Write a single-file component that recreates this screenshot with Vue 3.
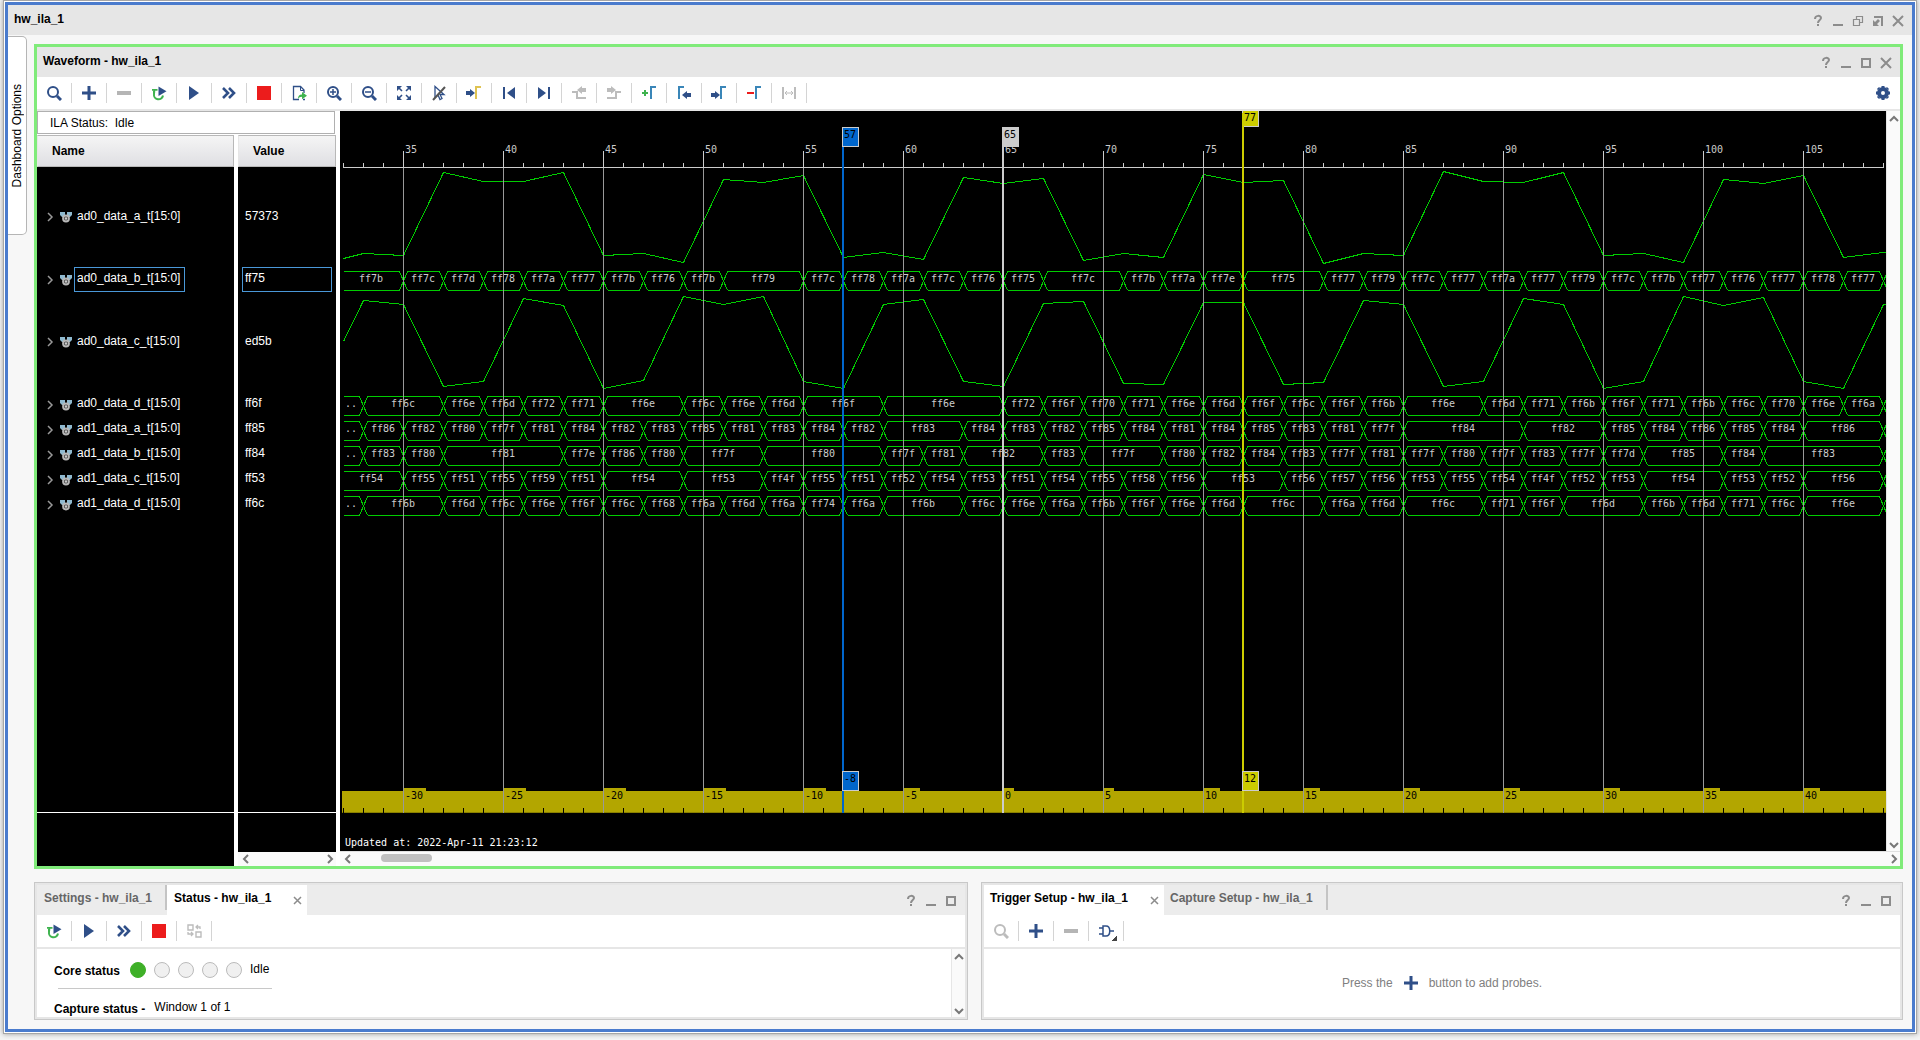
<script setup>
const INK = '#2f4f88'
const GREEN = '#3fb34f'
const TEAL = '#3a86b8'
const OFF = '#bcbcbc'

const flag = (x, y, c) => `<path d="M${x} ${y + 12}V${y}H${x + 5}" fill="none" stroke="${c}" stroke-width="2"/>`
const arrow = (x, y, dir, c) =>
  `<path d="M${x} ${y - 2}h${4 * dir}v-2l${5 * dir} 4l${-5 * dir} 4v-2h${-4 * dir}z" fill="${c}"/>`
const lens = (c, inner = '') =>
  `<circle cx="7" cy="7" r="5" fill="none" stroke="${c}" stroke-width="2"/><path d="M11 11l4 4" stroke="${c}" stroke-width="3"/>${inner}`

const icons = {
  search: lens(INK),
  searchOff: lens(OFF),
  plus: `<path d="M8 1v14M1 8h14" stroke="${INK}" stroke-width="3"/>`,
  minus: `<path d="M1 6h14v4H1z" fill="#b5b5b5"/>`,
  retrigger: `<path d="M3 6v3a4.5 4.5 0 0 0 9 1.5" fill="none" stroke="${GREEN}" stroke-width="2"/><path d="M1 4h5.5v1.8H4.2v2H2.5V5.8H1z" fill="${GREEN}"/><path d="M7.5 1.5V11l8-4.8z" fill="${INK}"/>`,
  play: `<path d="M3 1v14l10-7z" fill="${INK}"/>`,
  forward: `<path d="M2 3l5 5-5 5M8 3l5 5-5 5" fill="none" stroke="${INK}" stroke-width="2.6"/>`,
  stop: `<path d="M1 1h14v14H1z" fill="#ec1c1c"/>`,
  exportDoc: `<path d="M13 8V5L9.5 1.5h-7v13H8M12 14.5h2" fill="none" stroke="${INK}" stroke-width="1.3"/><path d="M9.5 1.5v4H13" fill="none" stroke="${INK}"/><path d="M7 14c0-3 1-4.5 4-4.5V7l5 3.8-5 3.4v-2.4c-2 0-3 .8-4 2.2z" fill="${GREEN}"/>`,
  zoomIn: lens(INK, `<path d="M7 4v6M4 7h6" stroke="${INK}" stroke-width="1.5"/>`),
  zoomOut: lens(INK, `<path d="M4 7h6" stroke="${INK}" stroke-width="1.5"/>`),
  fit: `<path d="M1 1h5L1 6zM15 1v5l-5-5zM1 15v-5l5 5zM15 15h-5l5-5z" fill="${INK}"/><path d="M3 3l3 3M13 3l-3 3M3 13l3-3M13 13l-3-3" stroke="${INK}" stroke-width="1.6"/>`,
  noCursor: `<path d="M4 1.5v11L7 10l2 4.500 2-1-2-4h4z" fill="none" stroke="${INK}" stroke-width="1.3"/><path d="M2 15L14 2" stroke="#555" stroke-width="2"/>`,
  gotoCursor: arrow(0, 8, 1, INK) + flag(10, 2, '#dfc352'),
  first: `<path d="M2 2h2v12H2zM14 2v12L6 8z" fill="${INK}"/>`,
  last: `<path d="M12 2h2v12h-2zM2 2v12l8-6z" fill="${INK}"/>`,
  prevEdge: `<path d="M1 7h5v6h9" fill="none" stroke="${OFF}" stroke-width="2"/>${arrow(15, 5, -1, OFF)}`,
  nextEdge: `<path d="M1 13h9V7h5" fill="none" stroke="${OFF}" stroke-width="2"/>${arrow(1, 5, 1, OFF)}`,
  addMarker: `<path d="M4 5v6M1 8h6" stroke="${GREEN}" stroke-width="2"/>${flag(10, 2, TEAL)}`,
  prevMarker: flag(3, 2, TEAL) + arrow(15, 10, -1, INK),
  nextMarker: arrow(0, 10, 1, INK) + flag(10, 2, TEAL),
  dropMarker: `<path d="M1 8h7" stroke="#ec1c1c" stroke-width="2"/>${flag(10, 2, TEAL)}`,
  span: `<path d="M2 2v12M14 2v12" stroke="${OFF}" stroke-width="2"/><path d="M4 8h8M6 6L4 8l2 2M10 6l2 2-2 2" fill="none" stroke="${OFF}"/>`,
  swap: `<path d="M2 2h5v5H2zM10 9h5v5h-5z" fill="none" stroke="${OFF}" stroke-width="1.4"/><path d="M14 6V4h-4M12 2l-2 2 2 2M2 9v2h5M5 9l2 2-2 2" fill="none" stroke="${OFF}" stroke-width="1.3"/>`,
  gate: `<path d="M5 3h3c5 0 5 10 0 10H5zM1 5h4M1 11h4M12 8h4" fill="none" stroke="${INK}" stroke-width="1.5"/>`,
  gear: `<circle cx="8" cy="8" r="4" fill="none" stroke="${INK}" stroke-width="4"/><path d="M8 1v2M8 13v2M1 8h2M13 8h2M3 3l1 1M13 13l-1-1M13 3l-1 1M3 13l1-1" stroke="${INK}" stroke-width="3"/>`,
  help: `<path d="M5 6c0-4 6-4 6-1 0 2-3 2-3 5M8 11v2" fill="none" stroke="#8c8c8c" stroke-width="2"/>`,
  minimize: `<path d="M3 11h10v2H3z" fill="#8c8c8c"/>`,
  maximize: `<path d="M4 4h8v8H4z" fill="none" stroke="#8c8c8c" stroke-width="2"/>`,
  restore: `<path d="M3.5 6.5h6v6h-6zM6.5 6.500v-3h6v6h-3" fill="none" stroke="#8c8c8c" stroke-width="1.2"/>`,
  float: `<path d="M4 4h8v9" fill="none" stroke="#8c8c8c" stroke-width="2"/><path d="M3 7v6h6L7 11l3-3-2-2-3 3z" fill="#8c8c8c"/>`,
  close: `<path d="M3 3l10 10M13 3L3 13" stroke="#8c8c8c" stroke-width="2"/>`,
  closeTab: `<path d="M5 5l7 7M12 5l-7 7" stroke="#8c8c8c" stroke-width="1.5"/>`,
  up: `<path d="M4 10l4-4 4 4" fill="none" stroke="#777" stroke-width="2"/>`,
  down: `<path d="M4 6l4 4 4-4" fill="none" stroke="#777" stroke-width="2"/>`,
  left: `<path d="M10 4L6 8l4 4" fill="none" stroke="#777" stroke-width="2"/>`,
  right: `<path d="M6 4l4 4-4 4" fill="none" stroke="#777" stroke-width="2"/>`,
  expand: `<path d="M6 4l4 4-4 4" fill="none" stroke="#999" stroke-width="1.5"/>`,
  probe: `<path d="M2 3h5v5H4L2 6zM9 3h5v3l-2 2H9z" fill="#8fb9cf"/><circle cx="8" cy="9.5" r="3" fill="#444" stroke="#b8b8b8" stroke-width="1.8"/><circle cx="8" cy="9.5" r="1.2" fill="#ccc"/>`
}

const waveTools = [
  ['search', 'Find'], ['plus', 'Add probes'], ['minus', 'Remove probes'], ['retrigger', 'Auto re-trigger'],
  ['play', 'Run trigger'], ['forward', 'Run trigger immediate'], ['stop', 'Stop trigger'], ['exportDoc', 'Export data'],
  ['zoomIn', 'Zoom in'], ['zoomOut', 'Zoom out'], ['fit', 'Zoom fit'], ['noCursor', 'Snap cursor'],
  ['gotoCursor', 'Go to cursor'], ['first', 'Go to first'], ['last', 'Go to last'], ['prevEdge', 'Previous transition'],
  ['nextEdge', 'Next transition'], ['addMarker', 'Add marker'], ['prevMarker', 'Previous marker'],
  ['nextMarker', 'Next marker'], ['dropMarker', 'Remove marker'], ['span', 'Measure span']
]
const statusTools = [
  ['retrigger', 'Auto re-trigger'], ['play', 'Run trigger'], ['forward', 'Run trigger immediate'],
  ['stop', 'Stop trigger'], ['swap', 'Switch view']
]
const triggerTools = [['searchOff', 'Find'], ['plus', 'Add probe'], ['minus', 'Remove probe'], ['gate', 'Trigger condition']]

const parseBus = text => text.split(' ').map(t => {
  const [label, end] = t.split(':')
  return { label, end: Number(end) }
})

const signals = [
  { name: 'ad0_data_a_t[15:0]', value: '57373', top: 56, analog: [91, 86, 88, 5, 14, 14, 5, 88, 86, 95, 12, 15, 8, 90, 85, 92, 10, 16, 11, 93, 86, 90, 7, 15, 13, 96, 86, 88, 4, 14, 15, 5, 88, 86, 95, 12, 16, 8, 90, 85] },
  { name: 'ad0_data_b_t[15:0]', value: 'ff75', top: 156, selected: true, bus: parseBus('ff7b:35 ff7c:37 ff7d:39 ff78:41 ff7a:43 ff77:45 ff7b:47 ff76:49 ff7b:51 ff79:55 ff7c:57 ff78:59 ff7a:61 ff7c:63 ff76:65 ff75:67 ff7c:71 ff7b:73 ff7a:75 ff7e:77 ff75:81 ff77:83 ff79:85 ff7c:87 ff77:89 ff7a:91 ff77:93 ff79:95 ff7c:97 ff7b:99 ff77:101 ff76:103 ff77:105 ff78:107 ff77:109') },
  { name: 'ad0_data_c_t[15:0]', value: 'ed5b', top: 181, analog: [49, 8, 12, 94, 89, 6, 13, 96, 88, 4, 12, 4, 89, 96, 12, 7, 89, 94, 11, 9, 91, 92, 10, 10, 92, 90, 8, 12, 94, 89, 6, 12, 96, 89, 4, 13, 5, 89, 96, 12] },
  { name: 'ad0_data_d_t[15:0]', value: 'ff6f', top: 281, bus: parseBus('..:33 ff6c:37 ff6e:39 ff6d:41 ff72:43 ff71:45 ff6e:49 ff6c:51 ff6e:53 ff6d:55 ff6f:59 ff6e:65 ff72:67 ff6f:69 ff70:71 ff71:73 ff6e:75 ff6d:77 ff6f:79 ff6c:81 ff6f:83 ff6b:85 ff6e:89 ff6d:91 ff71:93 ff6b:95 ff6f:97 ff71:99 ff6b:101 ff6c:103 ff70:105 ff6e:107 ff6a:109') },
  { name: 'ad1_data_a_t[15:0]', value: 'ff85', top: 306, bus: parseBus('..:33 ff86:35 ff82:37 ff80:39 ff7f:41 ff81:43 ff84:45 ff82:47 ff83:49 ff85:51 ff81:53 ff83:55 ff84:57 ff82:59 ff83:63 ff84:65 ff83:67 ff82:69 ff85:71 ff84:73 ff81:75 ff84:77 ff85:79 ff83:81 ff81:83 ff7f:85 ff84:91 ff82:95 ff85:97 ff84:99 ff86:101 ff85:103 ff84:105 ff86:109') },
  { name: 'ad1_data_b_t[15:0]', value: 'ff84', top: 331, bus: parseBus('..:33 ff83:35 ff80:37 ff81:43 ff7e:45 ff86:47 ff80:49 ff7f:53 ff80:59 ff7f:61 ff81:63 ff82:67 ff83:69 ff7f:73 ff80:75 ff82:77 ff84:79 ff83:81 ff7f:83 ff81:85 ff7f:87 ff80:89 ff7f:91 ff83:93 ff7f:95 ff7d:97 ff85:101 ff84:103 ff83:109') },
  { name: 'ad1_data_c_t[15:0]', value: 'ff53', top: 356, bus: parseBus('ff54:35 ff55:37 ff51:39 ff55:41 ff59:43 ff51:45 ff54:49 ff53:53 ff4f:55 ff55:57 ff51:59 ff52:61 ff54:63 ff53:65 ff51:67 ff54:69 ff55:71 ff58:73 ff56:75 ff53:79 ff56:81 ff57:83 ff56:85 ff53:87 ff55:89 ff54:91 ff4f:93 ff52:95 ff53:97 ff54:101 ff53:103 ff52:105 ff56:109') },
  { name: 'ad1_data_d_t[15:0]', value: 'ff6c', top: 381, bus: parseBus('..:33 ff6b:37 ff6d:39 ff6c:41 ff6e:43 ff6f:45 ff6c:47 ff68:49 ff6a:51 ff6d:53 ff6a:55 ff74:57 ff6a:59 ff6b:63 ff6c:65 ff6e:67 ff6a:69 ff6b:71 ff6f:73 ff6e:75 ff6d:77 ff6c:81 ff6a:83 ff6d:85 ff6c:89 ff71:91 ff6f:93 ff6d:97 ff6b:99 ff6d:101 ff71:103 ff6c:105 ff6e:109') }
]

// Sample axis: 20 px per sample, first visible sample is 32.
const FIRST = 32
const LAST = 109
const TRIGGER = 65
const sx = s => 3 + 20 * (s - FIRST)

const samples = Array.from({ length: LAST - FIRST + 1 }, (_, i) => FIRST + i)
const majors = samples.filter(s => s % 5 === 0)
const minors = samples.filter(s => s % 5 !== 0)
const offsets = majors.map(s => ({ s, text: String(s - TRIGGER) }))

// Analog traces change on odd samples; the first point is the cut-off edge.
const analogPoints = sig => {
  const pts = sig.analog.map((v, i) => [sx(i === 0 ? FIRST : 31 + 2 * i) + 0.5, sig.top + v + 0.5])
  const last = pts[pts.length - 1]
  pts.push([last[0] + 4, last[1]])
  return pts.map(p => p.join(',')).join(' ')
}

const busPath = sig => {
  const t = sig.top + 4.5
  const b = t + 19
  let x = sx(FIRST) + 0.5
  let d = ''
  for (const c of sig.bus) {
    const e = sx(c.end) + 0.5
    d += `M${x} ${t}H${e - 4}L${e + 4} ${b}M${x} ${b}H${e - 4}L${e + 4} ${t}`
    x = e + 4
  }
  return d
}

// Labels sit in the middle of their cell; the first cell starts at the pane's edge.
const busLabels = sig => {
  let start = 0
  return sig.bus.map(c => {
    const x = Math.floor((start + sx(c.end)) / 2)
    start = sx(c.end)
    return { x, text: c.label }
  })
}
</script>

<template>
  <div class="frame">
    <main class="window">
      <header class="bar">
        <h1>hw_ila_1</h1>
        <div class="controls">
          <button v-for="c in ['help', 'minimize', 'restore', 'float', 'close']" :key="c" :aria-label="c">
            <svg width="16" height="16" v-html="icons[c]" />
          </button>
        </div>
      </header>

      <div class="workspace">
        <aside class="rail"><button class="rail-tab"><span>Dashboard Options</span></button></aside>

        <div class="stack">
          <section class="wave-panel">
            <header class="bar">
              <h2>Waveform - hw_ila_1</h2>
              <div class="controls">
                <button v-for="c in ['help', 'minimize', 'maximize', 'close']" :key="c" :aria-label="c">
                  <svg width="16" height="16" v-html="icons[c]" />
                </button>
              </div>
            </header>
            <div class="toolbar">
              <button v-for="t in waveTools" :key="t[1]" class="tool" :aria-label="t[1]">
                <svg width="16" height="16" v-html="icons[t[0]]" />
              </button>
              <button class="tool settings" aria-label="Settings"><svg width="16" height="16" v-html="icons.gear" /></button>
            </div>

            <div class="wave-body">
              <div class="lists">
                <p class="ila">ILA Status:&nbsp; Idle</p>
                <div class="columns">
                  <div class="column names">
                    <table>
                      <thead><tr><th>Name</th></tr></thead>
                      <tbody>
                        <tr v-for="s in signals" :key="s.name" :class="{ tall: s.analog }">
                          <td>
                            <div class="signal">
                              <svg width="16" height="16" v-html="icons.expand" />
                              <svg width="16" height="16" v-html="icons.probe" />
                              <span class="cell" :class="{ selected: s.selected }">{{ s.name }}</span>
                            </div>
                          </td>
                        </tr>
                      </tbody>
                    </table>
                    <div class="filler"></div>
                    <div class="foot tail"></div>
                  </div>
                  <div class="column values">
                    <table>
                      <thead><tr><th>Value</th></tr></thead>
                      <tbody>
                        <tr v-for="s in signals" :key="s.name" :class="{ tall: s.analog }">
                          <td><div class="cell" :class="{ selected: s.selected }">{{ s.value }}</div></td>
                        </tr>
                      </tbody>
                    </table>
                    <div class="filler"></div>
                    <div class="foot"></div>
                    <div class="hscroll">
                      <button aria-label="Scroll left"><svg width="16" height="14" viewBox="0 1 16 14" v-html="icons.left" /></button>
                      <button aria-label="Scroll right"><svg width="12" height="14" viewBox="2 1 12 14" v-html="icons.right" /></button>
                    </div>
                  </div>
                </div>
              </div>

              <div class="viewer">
                <div class="view-row">
                  <svg class="canvas" height="740" role="img" aria-label="Captured waveforms">
                    <g fill="#ccc">
                      <rect x="3" y="56" :width="sx(LAST) - 2" height="1" />
                      <rect v-for="s in minors" :key="s" :x="sx(s)" y="52" width="1" height="4" />
                      <rect v-for="s in majors" :key="s" :x="sx(s)" y="40" width="1" height="16" />
                      <text v-for="s in majors" :key="'t' + s" :x="sx(s) + 2" y="42">{{ s }}</text>
                    </g>

                    <template v-for="sig in signals" :key="sig.name">
                      <polyline v-if="sig.analog" class="trace" :points="analogPoints(sig)" />
                      <template v-else>
                        <path class="trace" :d="busPath(sig)" />
                        <text v-for="(l, i) in busLabels(sig)" :key="i" :x="l.x" :y="sig.top + 15" fill="#ccc" text-anchor="middle">{{ l.text }}</text>
                      </template>
                    </template>

                    <rect x="2" y="680" width="1600" height="22" fill="#b3a600" />
                    <rect v-for="o in offsets" :key="'b' + o.s" :x="sx(o.s)" y="677" :width="6 * o.text.length + 5" height="4" fill="#b3a600" />
                    <rect x="2" y="701" width="1600" height="1" fill="#8a8000" />
                    <rect v-for="s in minors" :key="'n' + s" :x="sx(s)" y="697" width="1" height="5" />
                    <rect v-for="s in majors" :key="'g' + s" :x="sx(s)" y="57" width="1" height="645" fill="#999" />
                    <text v-for="o in offsets" :key="'o' + o.s" :x="sx(o.s) + 2" y="688">{{ o.text }}</text>

                    <g>
                      <rect x="502" y="36" width="2" height="666" fill="#0066cc" />
                      <rect x="502" y="16" width="17" height="20" fill="#ccc" />
                      <rect x="503" y="17" width="15" height="18" fill="#0066cc" />
                      <text x="504" y="27">57</text>
                      <rect x="502" y="660" width="17" height="20" fill="#ccc" />
                      <rect x="503" y="661" width="15" height="18" fill="#0066cc" />
                      <text x="504" y="671">-8</text>
                    </g>
                    <g>
                      <rect x="662" y="16" width="2" height="686" fill="#ccc" />
                      <rect x="662" y="16" width="17" height="20" fill="#ccc" />
                      <text x="664" y="27">65</text>
                    </g>
                    <g>
                      <rect x="902" y="0" width="17" height="16" fill="#ccc" />
                      <rect x="903" y="0" width="15" height="15" fill="#cccc00" />
                      <rect x="902" y="2" width="2" height="700" fill="#cccc00" />
                      <text x="904" y="10">77</text>
                      <rect x="902" y="660" width="17" height="20" fill="#ccc" />
                      <rect x="903" y="661" width="15" height="18" fill="#cccc00" />
                      <text x="904" y="671">12</text>
                    </g>
                    <text x="5" y="735" fill="#fff">Updated at: 2022-Apr-11 21:23:12</text>
                  </svg>
                  <div class="vscroll">
                    <button aria-label="Scroll up"><svg width="14" height="16" viewBox="1 0 14 16" v-html="icons.up" /></button>
                    <button aria-label="Scroll down"><svg width="14" height="12" viewBox="1 2 14 12" v-html="icons.down" /></button>
                  </div>
                </div>
                <div class="hscroll wide">
                  <button aria-label="Scroll left"><svg width="16" height="14" viewBox="0 1 16 14" v-html="icons.left" /></button>
                  <div class="thumb"></div>
                  <button aria-label="Scroll right"><svg width="12" height="14" viewBox="2 1 12 14" v-html="icons.right" /></button>
                </div>
              </div>
            </div>
          </section>

          <div class="lower">
            <section class="panel status">
              <header class="tabs">
                <button class="tab">Settings - hw_ila_1</button>
                <i class="divider"></i>
                <div class="tab active">
                  <button>Status - hw_ila_1</button>
                  <button class="x" aria-label="Close tab"><svg width="16" height="16" v-html="icons.closeTab" /></button>
                </div>
                <div class="controls">
                  <button v-for="c in ['help', 'minimize', 'maximize']" :key="c" :aria-label="c">
                    <svg width="16" height="16" v-html="icons[c]" />
                  </button>
                </div>
              </header>
              <div class="toolbar">
                <button v-for="t in statusTools" :key="t[1]" class="tool" :aria-label="t[1]">
                  <svg width="16" height="16" v-html="icons[t[0]]" />
                </button>
              </div>
              <div class="panel-body">
                <div class="report">
                  <div class="line core">
                    <b>Core status</b>
                    <span class="lamps"><i v-for="n in 5" :key="n" :class="{ on: n === 1 }"></i></span>
                    <span class="state">Idle</span>
                  </div>
                  <hr />
                  <div class="line capture"><b>Capture status -</b><span class="state">Window 1 of 1</span></div>
                </div>
                <div class="vscroll">
                  <button aria-label="Scroll up"><svg width="14" height="16" viewBox="1 0 14 16" v-html="icons.up" /></button>
                  <button aria-label="Scroll down"><svg width="14" height="12" viewBox="1 2 14 12" v-html="icons.down" /></button>
                </div>
              </div>
            </section>

            <section class="panel trigger">
              <header class="tabs">
                <div class="tab active">
                  <button>Trigger Setup - hw_ila_1</button>
                  <button class="x" aria-label="Close tab"><svg width="16" height="16" v-html="icons.closeTab" /></button>
                </div>
                <button class="tab">Capture Setup - hw_ila_1</button>
                <i class="divider"></i>
                <div class="controls">
                  <button v-for="c in ['help', 'minimize', 'maximize']" :key="c" :aria-label="c">
                    <svg width="16" height="16" v-html="icons[c]" />
                  </button>
                </div>
              </header>
              <div class="toolbar">
                <button v-for="t in triggerTools" :key="t[1]" class="tool" :class="{ menu: t[0] === 'gate' }" :aria-label="t[1]">
                  <svg width="16" height="16" v-html="icons[t[0]]" />
                </button>
              </div>
              <div class="panel-body empty">
                <span>Press the</span>
                <svg width="16" height="16" v-html="icons.plus" />
                <span>button to add probes.</span>
              </div>
            </section>
          </div>
        </div>
      </div>
    </main>
  </div>
</template>

<style>
body {
  margin: 0;
  background: #f4f4f4;
}
</style>

<style scoped>
* {
  box-sizing: border-box;
}
.frame {
  margin: 0 3px 5px;
  padding: 1px;
  border: 1px solid #a6a6a6;
  background: #fff;
  box-shadow: 0 0 5px #999;
  font: 12px/16px "Liberation Sans", Arial, sans-serif;
  color: #000;
}
.window {
  border: 3px solid #4a7bcd;
  background: #f7f7f7;
}
button {
  margin: 0;
  padding: 0;
  border: 0;
  background: none;
  font: inherit;
  color: inherit;
}
svg {
  display: block;
  flex: none;
}
h1,
h2 {
  margin: 0;
  font-size: 12px;
  font-weight: bold;
}
.bar {
  display: flex;
  align-items: center;
  justify-content: space-between;
  height: 30px;
  padding: 0 6px 2px;
  background: #e6e6e6;
}
.controls {
  display: flex;
  gap: 4px;
  margin-left: auto;
  padding-top: 4px;
}
.workspace {
  display: flex;
}
.rail {
  width: 26px;
  padding-top: 1px;
}
.rail-tab {
  display: flex;
  align-items: center;
  justify-content: center;
  width: 19px;
  height: 199px;
  border: 1px solid #b5b5b5;
  border-left: 0;
  border-radius: 0 5px 5px 0;
  background: #fff;
}
.rail-tab span {
  writing-mode: vertical-rl;
  transform: rotate(180deg);
}
.stack {
  display: flex;
  flex: 1;
  flex-direction: column;
  gap: 13px;
  min-width: 0;
  padding: 9px 9px 9px 0;
}
.wave-panel {
  border: 3px solid #80eb7a;
  background: #fff;
}
.toolbar {
  display: flex;
  align-items: center;
  height: 34px;
  border-bottom: 2px solid #e6e6e6;
  background: #fff;
}
.tool {
  display: flex;
  align-items: center;
  justify-content: center;
  width: 35px;
  height: 20px;
  border-right: 1px solid #d4d4d4;
}
.tool.settings {
  margin-left: auto;
  border-right: 0;
}
.tool.menu {
  position: relative;
}
.tool.menu::after {
  content: "";
  position: absolute;
  right: 6px;
  bottom: 0;
  width: 5px;
  height: 5px;
  background: linear-gradient(135deg, transparent 50%, #444 50%);
}
.wave-body {
  display: flex;
  gap: 4px;
}
.lists {
  display: flex;
  flex: none;
  flex-direction: column;
  width: 299px;
}
.ila {
  width: 298px;
  height: 23px;
  margin: 0 0 1px;
  padding: 3px 12px;
  border: 1px solid #b0b0b0;
}
.columns {
  display: flex;
  flex: 1;
  gap: 4px;
}
.column {
  display: flex;
  flex-direction: column;
  background: #000;
  color: #fff;
}
.names {
  width: 197px;
}
.values {
  width: 98px;
}
table {
  width: 100%;
  border-spacing: 0;
}
th {
  height: 32px;
  padding: 0 14px;
  border: 1px solid #b8b8b8;
  border-left-color: #e6e6e6;
  background: linear-gradient(#f5f5f5, #dfdfe3);
  color: #000;
  text-align: left;
}
td {
  height: 25px;
  padding: 0;
}
.tall td {
  height: 100px;
}
.signal {
  display: flex;
  align-items: center;
  padding-left: 5px;
}
.cell {
  height: 25px;
  padding: 2px;
  border: 1px solid transparent;
  line-height: 17px;
}
.names .cell {
  padding-right: 4px;
}
.values .cell {
  margin: 0 4px;
}
.cell.selected {
  border-color: #4a98d8;
}
.filler {
  flex: 1;
}
.foot {
  height: 40px;
  border-top: 1px solid #fff;
}
.foot.tail {
  height: 54px;
}
.hscroll {
  display: flex;
  align-items: center;
  justify-content: space-between;
  height: 14px;
  background: #fafafa;
}
.hscroll.wide {
  height: 15px;
  border-top: 1px solid #e0e0e0;
}
.thumb {
  width: 51px;
  height: 8px;
  margin: 0 auto 2px 25px;
  border-radius: 4px;
  background: #c0c0c0;
}
.viewer {
  flex: 1;
  min-width: 0;
}
.view-row {
  display: flex;
}
.canvas {
  flex: 1 1 0;
  width: 0;
  min-width: 0;
  background: #000;
  shape-rendering: crispEdges;
  font: 10px "DejaVu Sans Mono", "Liberation Mono", monospace;
}
.trace {
  fill: none;
  stroke: #00cc00;
  stroke-width: 1;
}
.vscroll {
  display: flex;
  flex: none;
  flex-direction: column;
  justify-content: space-between;
  width: 14px;
  border-left: 1px solid #e6e6e6;
  background: #fafafa;
}
.lower {
  display: flex;
  gap: 13px;
}
.panel {
  min-width: 0;
  padding: 2px;
  border: 1px solid #c8c8c8;
  background: #e6e6e6;
}
.panel.status {
  flex: 934 1 0;
}
.panel.trigger {
  flex: 922 1 0;
}
.tabs {
  display: flex;
  height: 30px;
  background: #ececec;
}
.tab {
  height: 30px;
  padding: 0 6px 5px;
  color: #666;
  font-weight: bold;
  white-space: nowrap;
}
.status .tab {
  width: 128px;
  padding-left: 7px;
  text-align: left;
}
.tab.active,
.status .tab.active {
  display: flex;
  align-items: center;
  justify-content: space-between;
  width: 140px;
  padding-right: 2px;
  background: #fff;
  color: #000;
}
.trigger .tab.active {
  width: 180px;
}
.tab .x {
  padding-top: 5px;
}
.divider {
  width: 2px;
  height: 25px;
  background: #c4c4c4;
}
.trigger .divider {
  margin-left: 7px;
}
.tabs .controls {
  padding: 2px 6px 0 0;
}
.panel-body {
  display: flex;
  height: 68px;
  overflow: hidden;
  background: #fff;
}
.report {
  flex: 1;
  padding: 12px 17px 0;
}
.line {
  display: flex;
}
.line b {
  padding-top: 2px;
}
.core {
  height: 27px;
}
.lamps {
  display: flex;
  gap: 8px;
  padding: 1px 8px 0 10px;
}
.lamps i {
  width: 16px;
  height: 16px;
  border: 1px solid #bbb;
  border-radius: 50%;
  background: #f0f0f0;
}
.lamps .on {
  border-color: #3fb028;
  background: #3fb028;
}
hr {
  width: 214px;
  height: 1px;
  margin: 0 0 10px 4px;
  border: 0;
  background: #c8c8c8;
}
.capture {
  gap: 9px;
}
.empty {
  align-items: center;
  justify-content: center;
  gap: 10px;
  color: #808080;
}
</style>
